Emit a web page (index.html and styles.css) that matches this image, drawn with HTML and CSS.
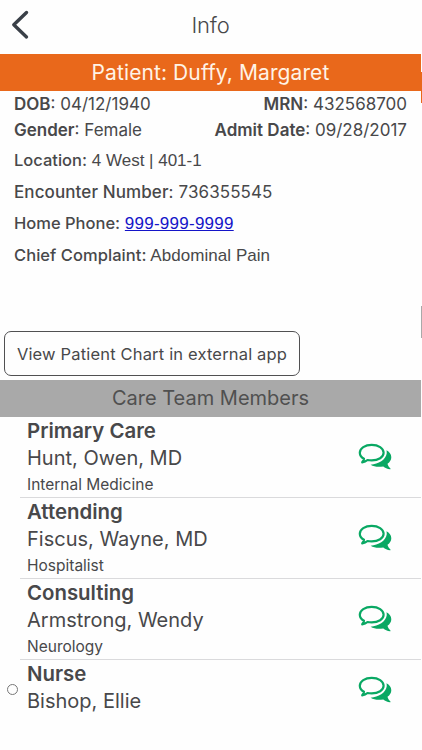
FILE: index.html
```html
<!DOCTYPE html>
<html lang="en">
<head>
    <meta charset="UTF-8">
    <meta name="viewport" content="width=device-width, initial-scale=1.0">
    <title>Info</title>
    <link rel="stylesheet" href="styles.css">
</head>
<body>
    <svg class="defs" width="0" height="0">
        <symbol id="chat" viewBox="0 0 34 27">
            <path fill="none" stroke="#09a863" stroke-width="2.2" stroke-linejoin="round" d="M13.700 1.800C7 1.800 1.800 5.200 1.800 9.700c0 2.500 1.600 4.700 4.200 6.100-.3 1.400-.8 2.300-1.800 3.500 2.300-.3 3.900-1.100 5.300-2.300 1.300.3 2.700.4 4.200.4 6.700 0 11.900-3.300 11.900-7.700S20.400 1.800 13.700 1.800z"/>
            <path fill="#09a863" d="M28.500 7.300c2.900 1.600 4.800 4.100 4.800 6.900 0 2.600-1.400 4.900-3.800 6.500.4 1.600 1.300 3.200 2.900 4.700.4.500.1.900-.4.800-2.700-.3-5-1.300-6.700-2.800-4.700.9-9.200.5-12.700-1.600C20.500 21 27.700 17 28.700 10.600c.1-1 .1-2.200-.2-3.300z"/>
        </symbol>
    </svg>
    <div class="screen">
        <div class="page">
            <div class="navbar">
                <svg class="back" width="18" height="30" viewBox="0 0 18 30"><path fill="none" stroke="#3a4048" stroke-width="3.400" stroke-linecap="round" stroke-linejoin="round" d="M15.500 2.500L2.800 14.800l12.700 12.100"/></svg>
                <h1>Info</h1>
            </div>
            <div class="patient">Patient: Duffy, Margaret</div>
            <div class="details">
                <div class="pair"><span><b>DOB</b>: 04/12/1940</span><span><b>MRN</b>: 432568700</span></div>
                <div class="pair"><span><b>Gender</b>: Female</span><span><b>Admit Date</b>: 09/28/2017</span></div>
                <div class="line"><b>Location:</b> 4 West | 401-1</div>
                <div class="line encounter"><b>Encounter Number</b>: 736355545</div>
                <div class="line"><b>Home Phone:</b> <a href="tel:999-999-9999">999-999-9999</a></div>
                <div class="line"><b>Chief Complaint:</b> Abdominal Pain</div>
            </div>
            <button type="button" class="chart-button">View Patient Chart in external app</button>
            <div class="team-title">Care Team Members</div>
            <div class="team">
                <div class="member">
                    <div class="info"><h2>Primary Care</h2><p class="name">Hunt, Owen, MD</p><p class="dept">Internal Medicine</p></div>
                    <svg class="chat"><use href="#chat"/></svg>
                </div>
                <div class="member">
                    <div class="info"><h2>Attending</h2><p class="name">Fiscus, Wayne, MD</p><p class="dept">Hospitalist</p></div>
                    <svg class="chat"><use href="#chat"/></svg>
                </div>
                <div class="member">
                    <div class="info"><h2>Consulting</h2><p class="name">Armstrong, Wendy</p><p class="dept">Neurology</p></div>
                    <svg class="chat"><use href="#chat"/></svg>
                </div>
                <div class="member last">
                    <i class="status"></i>
                    <div class="info"><h2>Nurse</h2><p class="name">Bishop, Ellie</p></div>
                    <svg class="chat"><use href="#chat"/></svg>
                </div>
            </div>
        </div>
        <!-- edge of the next page in the pager -->
        <div class="next-page">
            <div class="next-bar"></div>
            <div class="next-team"></div>
        </div>
    </div>
</body>
</html>
```
FILE: styles.css
```css
* {
  margin: 0;
  padding: 0;
  box-sizing: border-box;
}

body {
  background: #fefefe;
  color: #48484a;
  font-family: Inter, "Liberation Sans", sans-serif;
  overflow: hidden;
}

.defs {
  display: block;
}

.screen {
  display: flex;
  width: 422px;
  height: 750px;
}

.page {
  width: 421px;
}

.navbar {
  display: grid;
  grid-template-columns: 40px 1fr 40px;
  align-items: center;
  height: 54px;
}

.back {
  margin: -4px 0 0 11px;
}

h1 {
  font-size: 22px;
  font-weight: 300;
  text-align: center;
  line-height: 50px;
  height: 54px;
  letter-spacing: -0.2px;
}

.patient {
  height: 37px;
  line-height: 37px;
  background: #e9681b;
  color: #fff3e6;
  font-size: 21px;
  letter-spacing: 0.1px;
  text-align: center;
}

.details {
  height: 240px;
  padding: 0 14px;
  font-size: 17px;
  white-space: nowrap;
}

.details b {
  font-weight: 600;
}

.pair {
  display: flex;
  justify-content: space-between;
  height: 26px;
  line-height: 26px;
}

.line {
  height: 31.5px;
  line-height: 31.5px;
  font-family: "Liberation Sans", Arial, sans-serif;
}

.line b {
  font-family: Inter, sans-serif;
  font-size: 16.5px;
  font-weight: 500;
}

.line:nth-child(3) {
  margin-top: 2px;
}

.line:nth-child(6) {
  letter-spacing: 0.05px;
}

.encounter {
  font-family: Inter, sans-serif;
  letter-spacing: 0.1px;
}

.encounter b {
  font-size: 17px;
}

a {
  color: #1414c8;
  letter-spacing: 0.25px;
  text-decoration: underline;
}

.chart-button {
  display: block;
  width: 296px;
  height: 45px;
  margin-left: 4px;
  border: 1.5px solid #505052;
  border-radius: 7px;
  background: #fefefe;
  color: #48484a;
  font-family: inherit;
  font-size: 16.5px;
  letter-spacing: 0.17px;
}

.team-title {
  height: 37px;
  margin-top: 4px;
  line-height: 37px;
  background: #a9a9a9;
  color: #505050;
  font-size: 20px;
  text-align: center;
}

.member {
  display: flex;
  justify-content: space-between;
  position: relative;
  height: 81px;
  margin-left: 20px;
  padding: 0 29px 0 7px;
  border-bottom: 1.5px solid #dadadc;
}

.last {
  border-bottom: none;
}

h2 {
  font-size: 20.4px;
  font-weight: 600;
  line-height: 28px;
}

.name {
  font-size: 20px;
  line-height: 27px;
}

.dept {
  font-size: 15.5px;
  line-height: 26px;
}

.chat {
  width: 34px;
  height: 27px;
  margin-top: 26px;
}

.last .chat {
  margin-top: 16px;
}

.status {
  position: absolute;
  left: -13px;
  top: 24px;
  width: 11px;
  height: 11px;
  border: 1px solid #777;
  border-radius: 50%;
}

.next-page {
  width: 1px;
}

.next-bar {
  height: 31px;
  margin-top: 72px;
  background: #e9681b;
}

.next-team {
  height: 32px;
  margin-top: 203px;
  background: #a9a9a9;
}
```
